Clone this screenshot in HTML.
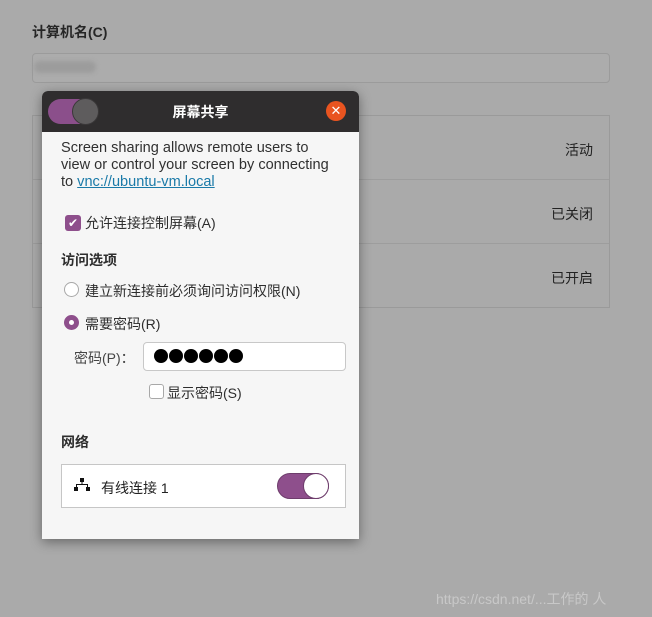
<!DOCTYPE html><html><head><meta charset="utf-8"><style>
*{margin:0;padding:0;box-sizing:border-box}
body{width:652px;height:617px;background:#aaaaaa;font-family:"Liberation Sans","Noto Sans CJK SC",sans-serif;color:#2e2e2e;position:relative;overflow:hidden;font-size:14px}
.abs{position:absolute;white-space:nowrap}
</style></head><body>
<div class="abs" style="left:32px;top:22px;font-weight:bold;font-size:14px;color:#262626">计算机名(C)</div>
<div class="abs" style="left:32px;top:53px;width:578px;height:30px;border:1px solid #9b9b9b;border-radius:4px;background:#acacac"></div>
<div class="abs" style="left:34px;top:61px;width:62px;height:12px;border-radius:6px;background:#9c9c9c;filter:blur(2px)"></div>
<div class="abs" style="left:32px;top:115px;width:578px;height:193px;border:1px solid #9a9a9a;background:#aaaaaa"></div>
<div class="abs" style="left:33px;top:179px;width:576px;height:1px;background:#9d9d9d"></div>
<div class="abs" style="left:33px;top:243px;width:576px;height:1px;background:#9d9d9d"></div>
<div class="abs" style="left:565px;top:140px;color:#222">活动</div>
<div class="abs" style="left:551px;top:204px;color:#222">已关闭</div>
<div class="abs" style="left:551px;top:268px;color:#222">已开启</div>
<div class="abs" style="left:436px;top:589px;color:#c8c8c8;font-size:14px">https://csdn.net/...工作的 人</div>

<div class="abs" style="left:42px;top:91px;width:317px;height:448px;background:#f6f6f6;border-radius:6px 6px 0 0;box-shadow:0 3px 12px rgba(0,0,0,.4);overflow:hidden">
 <div style="height:41px;background:#2f2d2e;position:relative">
  <div class="abs" style="left:6px;top:8px;width:50px;height:25px;border-radius:13px;background:#8b4f8b"></div>
  <div class="abs" style="left:30px;top:7px;width:27px;height:27px;border-radius:50%;background:#5e5c5d;border:1px solid #3a3839"></div>
  <div class="abs" style="left:0;width:317px;top:11px;text-align:center;color:#fff;font-weight:bold;font-size:14px">屏幕共享</div>
  <div class="abs" style="left:284px;top:10px;width:20px;height:20px;border-radius:50%;background:#e95420;color:#fff;text-align:center;font-size:13px;line-height:20px">✕</div>
 </div>
 <div class="abs" style="left:19px;top:48px;font-size:15px;line-height:17px;color:#303030;transform:scaleX(0.97);transform-origin:left">Screen sharing allows remote users to<br>view or control your screen by connecting<br>to <span style="color:#1a7aa8;text-decoration:underline">vnc://ubuntu-vm.local</span></div>
 <div class="abs" style="left:23px;top:124px;width:16px;height:16px;border-radius:3px;background:#8e4f8c;color:#fff;font-size:12px;text-align:center;line-height:16px">✔</div>
 <div class="abs" style="left:43px;top:122px">允许连接控制屏幕(A)</div>
 <div class="abs" style="left:19px;top:159px;font-weight:bold">访问选项</div>
 <div class="abs" style="left:22px;top:191px;width:15px;height:15px;border-radius:50%;border:1px solid #a8a8a8;background:#fff"></div>
 <div class="abs" style="left:43px;top:190px">建立新连接前必须询问访问权限(N)</div>
 <div class="abs" style="left:22px;top:224px;width:15px;height:15px;border-radius:50%;background:#8e4f8c"></div>
 <div class="abs" style="left:27px;top:229px;width:5px;height:5px;border-radius:50%;background:#fff"></div>
 <div class="abs" style="left:43px;top:223px">需要密码(R)</div>
 <div class="abs" style="left:32px;top:257px;color:#444">密码(P)：</div>
 <div class="abs" style="left:101px;top:251px;width:203px;height:29px;background:#fff;border:1px solid #c8c8c8;border-radius:4px"></div>
 <div class="abs" style="left:112px;top:258px;display:flex;gap:1px"><i style="width:14px;height:14px;border-radius:50%;background:#000"></i><i style="width:14px;height:14px;border-radius:50%;background:#000"></i><i style="width:14px;height:14px;border-radius:50%;background:#000"></i><i style="width:14px;height:14px;border-radius:50%;background:#000"></i><i style="width:14px;height:14px;border-radius:50%;background:#000"></i><i style="width:14px;height:14px;border-radius:50%;background:#000"></i></div>
 <div class="abs" style="left:107px;top:293px;width:15px;height:15px;border-radius:3px;border:1px solid #a8a8a8;background:#fff"></div>
 <div class="abs" style="left:125px;top:292px">显示密码(S)</div>
 <div class="abs" style="left:19px;top:341px;font-weight:bold">网络</div>
 <div class="abs" style="left:19px;top:373px;width:285px;height:44px;background:#fff;border:1px solid #c6c6c6"></div>
 <svg class="abs" style="left:32px;top:387px" width="16" height="14" viewBox="0 0 16 14"><rect x="6" y="0" width="4" height="4" fill="#111"/><rect x="7.5" y="4" width="1" height="3" fill="#111"/><rect x="2" y="6" width="12" height="1" fill="#111"/><rect x="2" y="6" width="1" height="3" fill="#111"/><rect x="13" y="6" width="1" height="3" fill="#111"/><rect x="0" y="9" width="4" height="4" fill="#111"/><rect x="12" y="9" width="4" height="4" fill="#111"/></svg>
 <div class="abs" style="left:59px;top:387px;color:#222">有线连接 1</div>
 <div class="abs" style="left:235px;top:382px;width:52px;height:26px;border-radius:13px;background:#8e4f8c;border:1px solid #6e3d6c"></div>
 <div class="abs" style="left:261px;top:382px;width:26px;height:26px;border-radius:50%;background:#fff;border:1px solid #6e3d6c"></div>
</div>
</body></html>
